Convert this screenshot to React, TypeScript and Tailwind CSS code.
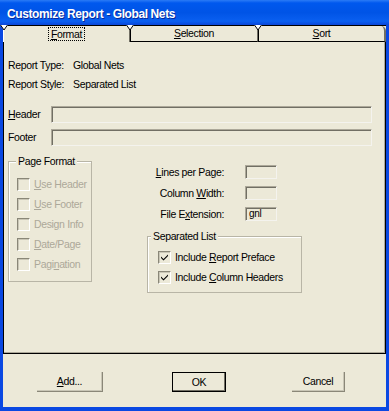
import React from 'react';

const Notch = ({ className }: { className: string }) => (
  <svg className={`absolute top-[-1px] ${className}`} width="8" height="6" viewBox="0 0 8 6">
    <path d="M0 0 L8 0 L4 5 Z" fill="#fff" />
    <path d="M0.5 0 L4 5 L7.5 0" fill="none" stroke="#000" strokeWidth="1" />
  </svg>
);

const Box = ({ checked }: { checked?: boolean }) => (
  <span className="relative w-[13px] h-[13px] shrink-0 border-t border-l border-[#8a8778] border-r border-b border-r-white border-b-white shadow-[inset_1px_1px_0_#c9c6b6] bg-[#ece9d8]">
    {checked && (
      <svg className="absolute left-[1px] top-[1px]" width="9" height="9" viewBox="0 0 9 9">
        <path d="M1 3.5 L3.5 6 L8 1.5 L8 3 L3.5 7.5 L1 5 Z" fill="#000" />
      </svg>
    )}
  </span>
);

const Sunken = ({ className }: { className: string }) => (
  <div
    className={`border-t border-l border-[#aca899] border-r border-b border-r-[#f4f3ee] border-b-[#f4f3ee] shadow-[inset_1px_1px_0_#716f64] bg-[#ece9d8] ${className}`}
  />
);

const CheckRow = ({ children, checked, disabled }: { children: React.ReactNode; checked?: boolean; disabled?: boolean }) => (
  <div className="h-[20px] flex items-center gap-[4px]">
    <Box checked={checked} />
    <span className={disabled ? 'text-[#aca899]' : 'text-black'}>{children}</span>
  </div>
);

const FieldRow = ({ children, value }: { children: React.ReactNode; value?: string }) => (
  <div className="h-[14px] flex items-center">
    <span className="w-[77px] text-right">{children}</span>
    <div className="ml-[21px] w-[32px] h-[14px] flex items-center border-t border-l border-[#aca899] border-r border-b border-r-[#f4f3ee] border-b-[#f4f3ee] shadow-[inset_1px_1px_0_#716f64] pl-[3px] text-[10px] leading-none">
      {value}
    </div>
  </div>
);

export default function App() {
  return (
    <div className="w-[389px] h-[411px] bg-[#0a48e2] flex flex-col font-['Liberation_Sans',Arial,sans-serif] text-[10.5px] leading-none text-black tracking-[-0.35px] select-none">
      {/* title bar */}
      <div className="h-[25px] shrink-0 flex items-center pl-[7px] pt-[2px] bg-[linear-gradient(to_bottom,#2b7bf6,#0058ee_12%,#0054e6_50%,#0a5ff0_85%,#0a46d8)]">
        <span className="text-white font-bold text-[12px] tracking-[-0.4px] [text-shadow:1px_1px_0_#0a2a9a]">
          Customize Report - Global Nets
        </span>
      </div>

      <div className="flex-1 mx-[3px] mb-[4px] bg-[#ece9d8] flex flex-col">
        {/* tabs */}
        <div className="h-[17px] shrink-0 flex border-t border-black">
          <div className="relative w-[127px] flex items-center justify-center border-l border-l-white border-r border-r-[#716f64]">
            <Notch className="left-[-4px]" />
            <span className="outline outline-1 outline-dotted outline-black px-[2px] py-[1px]">
              <u>F</u>ormat
            </span>
          </div>
          <div className="relative w-[128px] flex items-center justify-center border-l border-black border-b border-r border-r-[#716f64]">
            <Notch className="left-[-5px]" />
            <span>
              <u>S</u>election
            </span>
          </div>
          <div className="relative flex-1 flex items-center justify-center border-l border-black border-b border-r-2 border-r-[#716f64] rounded-tr-[5px]">
            <Notch className="left-[-5px]" />
            <span>
              <u>S</u>ort
            </span>
          </div>
        </div>

        {/* panel */}
        <div className="h-[312px] shrink-0 border-l border-r border-b border-black shadow-[inset_-1px_-1px_0_#aca899] pt-[14px] pl-[4px]">
          <div className="h-[19px] flex items-center">
            <span className="w-[65px]">Report Type:</span>
            <span>Global Nets</span>
          </div>
          <div className="h-[19px] flex items-center">
            <span className="w-[65px]">Report Style:</span>
            <span>Separated List</span>
          </div>

          <div className="mt-[12px] h-[17px] flex items-center">
            <span className="w-[43px]">
              <u>H</u>eader
            </span>
            <Sunken className="w-[321px] h-[17px]" />
          </div>
          <div className="mt-[6px] h-[17px] flex items-center">
            <span className="w-[43px]">Footer</span>
            <Sunken className="w-[321px] h-[17px]" />
          </div>

          <div className="mt-[9px] flex items-start">
            {/* Page Format group */}
            <div className="relative mt-[6px] w-[84px] h-[121px] border border-[#b8b5a6] shadow-[inset_1px_1px_0_#fff] pt-[12px] pl-[8px]">
              <span className="absolute left-[7px] top-[-6px] bg-[#ece9d8] px-[2px]">Page Format</span>
              <CheckRow disabled>
                <u>U</u>se Header
              </CheckRow>
              <CheckRow disabled>
                <u>U</u>se Footer
              </CheckRow>
              <CheckRow disabled>
                Desi<u>g</u>n Info
              </CheckRow>
              <CheckRow disabled>
                <u>D</u>ate/Page
              </CheckRow>
              <CheckRow disabled>
                Pagi<u>n</u>ation
              </CheckRow>
            </div>

            {/* right column */}
            <div className="ml-[55px] w-[155px] pt-[10px] flex flex-col">
              <div className="flex flex-col gap-[7px]">
                <FieldRow>
                  <u>L</u>ines per Page:
                </FieldRow>
                <FieldRow>
                  Column <u>W</u>idth:
                </FieldRow>
                <FieldRow value="gnl">
                  File E<u>x</u>tension:
                </FieldRow>
              </div>

              <div className="relative mt-[15px] h-[57px] border border-[#b8b5a6] shadow-[inset_1px_1px_0_#fff] pt-[10px] pl-[10px]">
                <span className="absolute left-[3px] top-[-6px] bg-[#ece9d8] px-[2px]">Separated List</span>
                <CheckRow checked>
                  Include <u>R</u>eport Preface
                </CheckRow>
                <CheckRow checked>
                  Include <u>C</u>olumn Headers
                </CheckRow>
              </div>
            </div>
          </div>
        </div>

        {/* buttons */}
        <div className="flex pt-[18px] pl-[34px]">
          <button className="w-[66px] h-[20px] flex items-center justify-center border-r border-b border-[#8a8778] shadow-[inset_-1px_-1px_0_#c9c6b6]">
            <span>
              <u>A</u>dd...
            </span>
          </button>
          <button className="ml-[69px] w-[54px] h-[20px] flex items-center justify-center border border-black shadow-[inset_-1px_-1px_0_#716f64]">
            OK
          </button>
          <button className="ml-[66px] w-[53px] h-[20px] flex items-center justify-center border-r border-b border-[#8a8778] shadow-[inset_-1px_-1px_0_#c9c6b6]">
            Cancel
          </button>
        </div>
      </div>
    </div>
  );
}
